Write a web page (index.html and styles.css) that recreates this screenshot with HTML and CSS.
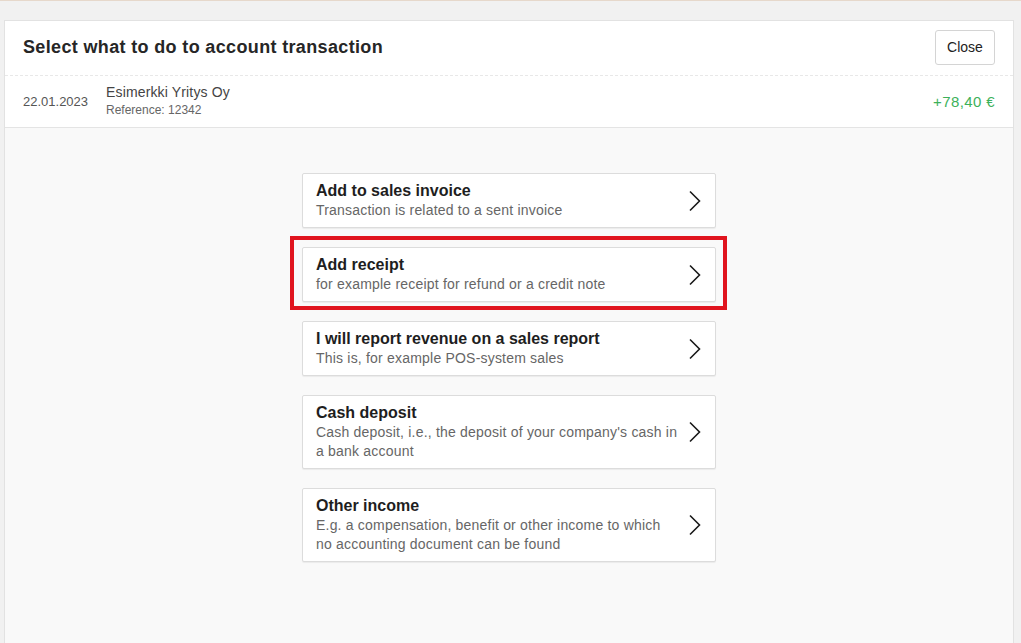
FILE: index.html
```html
<!DOCTYPE html>
<html>
<head>
<meta charset="utf-8">
<link rel="stylesheet" href="styles.css">
</head>
<body>
<div class="page">
  <div class="panel">
    <div class="head">
      <h1 class="title">Select what to do to account transaction</h1>
      <button class="close">Close</button>
    </div>
    <div class="tx">
      <div class="tx-date">22.01.2023</div>
      <div class="tx-info">
        <div class="tx-name">Esimerkki Yritys Oy</div>
        <div class="tx-ref">Reference: 12342</div>
      </div>
      <div class="tx-amount">+78,40 €</div>
    </div>
    <div class="body">
      <div class="options">
        <div class="opt">
          <div class="opt-text">
            <div class="opt-title">Add to sales invoice</div>
            <div class="opt-desc">Transaction is related to a sent invoice</div>
          </div>
          <svg class="chev" width="14" height="22" viewBox="0 0 14 22"><path d="M2 1.5 L11.5 11 L2 20.5" fill="none" stroke="#1a1a1a" stroke-width="1.6"/></svg>
        </div>
        <div class="opt highlighted">
          <div class="opt-text">
            <div class="opt-title">Add receipt</div>
            <div class="opt-desc">for example receipt for refund or a credit note</div>
          </div>
          <svg class="chev" width="14" height="22" viewBox="0 0 14 22"><path d="M2 1.5 L11.5 11 L2 20.5" fill="none" stroke="#1a1a1a" stroke-width="1.6"/></svg>
        </div>
        <div class="opt">
          <div class="opt-text">
            <div class="opt-title">I will report revenue on a sales report</div>
            <div class="opt-desc">This is, for example POS-system sales</div>
          </div>
          <svg class="chev" width="14" height="22" viewBox="0 0 14 22"><path d="M2 1.5 L11.5 11 L2 20.5" fill="none" stroke="#1a1a1a" stroke-width="1.6"/></svg>
        </div>
        <div class="opt">
          <div class="opt-text">
            <div class="opt-title">Cash deposit</div>
            <div class="opt-desc">Cash deposit, i.e., the deposit of your company's cash in a bank account</div>
          </div>
          <svg class="chev" width="14" height="22" viewBox="0 0 14 22"><path d="M2 1.5 L11.5 11 L2 20.5" fill="none" stroke="#1a1a1a" stroke-width="1.6"/></svg>
        </div>
        <div class="opt">
          <div class="opt-text">
            <div class="opt-title">Other income</div>
            <div class="opt-desc">E.g. a compensation, benefit or other income to which no accounting document can be found</div>
          </div>
          <svg class="chev" width="14" height="22" viewBox="0 0 14 22"><path d="M2 1.5 L11.5 11 L2 20.5" fill="none" stroke="#1a1a1a" stroke-width="1.6"/></svg>
        </div>
      </div>
    </div>
  </div>
</div>
</body>
</html>
```
FILE: styles.css
```css
* { box-sizing: border-box; }
html, body { margin: 0; padding: 0; height: 100%; }
body {
  font-family: "Liberation Sans", Arial, sans-serif;
  background: #f1f1f1;
  border-top: 1px solid #e6d8cb;
  overflow: hidden;
}
.page {
  padding: 19px 7px 0 4px;
  height: 100%;
}
.panel {
  background: #fff;
  border: 1px solid #e2e2e2;
  border-bottom: none;
  height: 100%;
  display: flex;
  flex-direction: column;
}
.head {
  height: 55px;
  display: flex;
  align-items: center;
  justify-content: space-between;
  padding: 0 18px 0 18px;
  border-bottom: 1px dashed #e8e8e8;
}
.title {
  margin: 0 0 2px 0;
  font-size: 18px;
  font-weight: bold;
  color: #262626;
  letter-spacing: 0.35px;
}
.close {
  font-family: "Liberation Sans", Arial, sans-serif;
  font-size: 14px;
  color: #222;
  background: #fff;
  border: 1px solid #d4d4d4;
  border-radius: 3px;
  width: 60px;
  height: 35px;
  padding: 0;
  margin-bottom: 2px;
}
.tx {
  height: 52px;
  display: flex;
  align-items: center;
  padding: 0 18px 0 18px;
  border-bottom: 1px solid #e4e4e4;
}
.tx-date {
  font-size: 13px;
  color: #555;
  width: 83px;
  padding-bottom: 1px;
}
.tx-info { flex: 1; margin-top: -1px; }
.tx-name { font-size: 14px; color: #444; line-height: 17px; letter-spacing: 0.15px; }
.tx-ref { font-size: 12px; color: #666; line-height: 15px; margin-top: 2px; }
.tx-amount { font-size: 15px; color: #3cb15a; padding-bottom: 1px; letter-spacing: 0.4px; }
.body {
  flex: 1;
  background: #f9f9f9;
  padding-top: 45px;
}
.options {
  width: 414px;
  margin-left: 297px;
  display: flex;
  flex-direction: column;
  gap: 19px;
}
.opt {
  position: relative;
  background: #fff;
  border: 1px solid #dcdcdc;
  border-radius: 2px;
  box-shadow: 0 1px 1px rgba(0,0,0,0.06);
  display: flex;
  align-items: center;
  padding: 6px 13px 7px 13px;
  min-height: 55px;
}
.opt-text { flex: 1; }
.opt-title {
  font-size: 16px;
  font-weight: bold;
  color: #1e1e1e;
  line-height: 21px;
}
.opt-desc {
  font-size: 14px;
  color: #666;
  line-height: 19px;
  padding-right: 2px;
  letter-spacing: 0.2px;
}
.chev { flex: none; margin-left: 6px; margin-top: 1px; }
.highlighted::after {
  content: "";
  position: absolute;
  left: -13px;
  top: -12px;
  right: -12px;
  bottom: -9px;
  border: 4px solid #e0141e;
  pointer-events: none;
}
```
